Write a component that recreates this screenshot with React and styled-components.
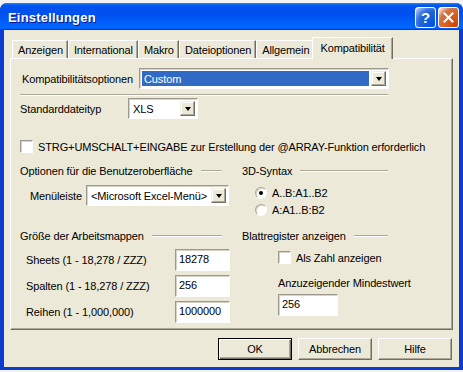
import React from 'react';
import styled, { createGlobalStyle, css } from 'styled-components';

const GlobalStyle = createGlobalStyle`
  html, body { margin: 0; padding: 0; background: #f2f2f2; }
  body { font-family: "Liberation Sans", Arial, sans-serif; font-size: 11px; letter-spacing: -0.12px; color: #000; }
  * { box-sizing: border-box; }
`;

const Window = styled.div`
  margin-top: 3px;
  width: 463px;
  height: 367px;
  display: flex;
  flex-direction: column;
  background: #0a3cd0;
  border-radius: 7px 7px 0 0;
  overflow: hidden;
`;

const TitleBar = styled.div`
  height: 27px;
  flex: none;
  display: flex;
  align-items: center;
  padding: 1px 4px 0 8px;
  background: linear-gradient(180deg, #0997ff, #0053ee 8%, #0050ee 40%, #06f 88%, #06f 93%, #005bff 95%, #003dd7 96%, #003dd7);
`;

const Title = styled.div`
  flex: 1;
  font-family: "Liberation Sans", Arial, sans-serif;
  font-weight: bold;
  font-size: 13px;
  color: #fff;
  text-shadow: 1px 1px #0f1089;
  letter-spacing: 0.2px;
`;

const CaptionButton = styled.div`
  width: 21px;
  height: 21px;
  margin-left: 2px;
  border: 1px solid #fff;
  border-radius: 3px;
  display: flex;
  align-items: center;
  justify-content: center;
  color: #fff;
  font-weight: bold;
  font-size: 15px;
  font-family: "Liberation Sans", Arial, sans-serif;
  background: ${p => p.$kind === 'close'
    ? 'radial-gradient(circle at 90% 90%, #cc4600 0%, #dc6527 55%, #cd7546 70%, #ffccb2 90%, #fff 100%)'
    : 'radial-gradient(circle at 90% 90%, #0054e9 0%, #2263d5 55%, #4479e4 70%, #a3bbec 90%, #fff 100%)'};
`;

const Body = styled.div`
  flex: 1;
  margin: 0 4px 3px 4px;
  background: #ece9d8;
  padding: 7px 6px 0 6px;
  display: flex;
  flex-direction: column;
`;

const TabStrip = styled.div`
  height: 21px;
  display: flex;
  align-items: flex-end;
  padding-left: 2px;
  position: relative;
  z-index: 1;
`;

const Tab = styled.div`
  height: 18px;
  padding: 0 4px 0 5px;
  display: flex;
  align-items: center;
  white-space: nowrap;
  border-top: 1px solid #fff;
  border-left: 1px solid #fff;
  border-right: 1px solid #716f64;
  box-shadow: inset -1px 0 #aca899;
  background: #ece9d8;
  ${p => p.$active && css`
    height: 22px;
    margin: 0 0 -1px -2px;
    padding: 0 7px 2px 7px;
  `}
`;

const Panel = styled.div`
  height: 272px;
  border: 1px solid;
  border-color: #fff #716f64 #716f64 #fff;
  box-shadow: inset -1px -1px #aca899;
  padding: 9px 0 0 9px;
  display: flex;
  flex-direction: column;
  align-items: flex-start;
`;

const Row = styled.div`
  display: flex;
  align-items: center;
  white-space: nowrap;
  height: ${p => p.$h || 21}px;
  margin-top: ${p => p.$mt || 0}px;
  padding-left: ${p => p.$pl || 0}px;
`;

const Label = styled.span`
  width: ${p => p.$w}px;
  padding-left: ${p => p.$pl || 0}px;
  white-space: nowrap;
  flex: none;
`;

const Sunken = css`
  border: 1px solid;
  border-color: #9c9a8e #fff #fff #9c9a8e;
  box-shadow: inset 1px 1px #d6d3c6;
  background: #fff;
`;

const Combo = styled.div`
  ${Sunken}
  width: ${p => p.$w}px;
  height: 21px;
  display: flex;
  align-items: stretch;
  padding: 2px;
  flex: none;
`;

const ComboText = styled.div`
  flex: 1;
  display: flex;
  align-items: center;
  padding-left: 2px;
  white-space: nowrap;
  overflow: hidden;
  ${p => p.$selected && css`
    background: #316ac5;
    color: #fff;
    margin-right: 2px;
  `}
`;

const DropButton = styled.div`
  width: 15px;
  flex: none;
  background: #ece9d8;
  border: 1px solid;
  border-color: #f1efe2 #716f64 #716f64 #f1efe2;
  box-shadow: inset -1px -1px #aca899, inset 1px 1px #fff;
  display: flex;
  align-items: center;
  justify-content: center;
  &::after {
    content: '';
    width: 0;
    height: 0;
    border-left: 3.5px solid transparent;
    border-right: 3.5px solid transparent;
    border-top: 4px solid #000;
  }
`;

const Separator = styled.div`
  width: 368px;
  margin-top: 5px;
  border-top: 1px solid #aca899;
  border-bottom: 1px solid #fff;
`;

const CheckBox = styled.span`
  ${Sunken}
  width: 13px;
  height: 13px;
  flex: none;
  margin-right: 5px;
`;

const Grid = styled.div`
  margin-top: 11px;
  display: grid;
  grid-template-columns: 202px 146px;
  grid-template-rows: 14px 51px 14px auto;
  column-gap: 20px;
`;

const GroupHeader = styled.div`
  display: flex;
  align-items: center;
  white-space: nowrap;
  &::after {
    content: '';
    flex: 1;
    margin-left: 8px;
    border-top: 1px solid #aca899;
    border-bottom: 1px solid #fff;
  }
`;

const Column = styled.div`
  display: flex;
  flex-direction: column;
  padding-left: ${p => p.$pl || 0}px;
  padding-top: ${p => p.$pt || 0}px;
  gap: ${p => p.$gap || 0}px;
`;

const Radio = styled.span`
  width: 12px;
  height: 12px;
  border-radius: 50%;
  flex: none;
  margin-right: 5px;
  background: #fff;
  border: 1px solid;
  border-color: #aca899 #fff #fff #aca899;
  box-shadow: inset 1px 1px #d6d3c6;
  display: flex;
  align-items: center;
  justify-content: center;
  ${p => p.$checked && css`
    &::after {
      content: '';
      width: 4px;
      height: 4px;
      border-radius: 50%;
      background: #000;
    }
  `}
`;

const TextBox = styled.div`
  ${Sunken}
  width: ${p => p.$w}px;
  height: 22px;
  padding: 3px 0 0 3px;
  flex: none;
`;

const Caption = styled.div`
  height: 14px;
  line-height: 14px;
  white-space: nowrap;
  margin-top: ${p => p.$mt || 0}px;
  margin-bottom: ${p => p.$mb || 0}px;
`;

const ButtonRow = styled.div`
  display: flex;
  justify-content: flex-end;
  gap: 6px;
  margin-top: 8px;
  padding-right: 1px;
`;

const Button = styled.div`
  width: 74px;
  height: 22px;
  display: flex;
  align-items: center;
  justify-content: center;
  background: #ece9d8;
  border: 1px solid;
  border-color: #fff #716f64 #716f64 #fff;
  box-shadow: inset -1px -1px #aca899;
  ${p => p.$default && css`
    border-color: #000;
    box-shadow: inset 1px 1px #fff, inset -1px -1px #716f64, inset -2px -2px #aca899;
  `}
`;

const tabs = ['Anzeigen', 'International', 'Makro', 'Dateioptionen', 'Allgemein', 'Kompatibilität'];

export default function App() {
  return (
    <>
      <GlobalStyle />
      <Window>
        <TitleBar>
          <Title>Einstellungen</Title>
          <CaptionButton>?</CaptionButton>
          <CaptionButton $kind="close">
            <svg width="11" height="11" viewBox="0 0 11 11">
              <path d="M1.5 1.5 L9.5 9.5 M9.5 1.5 L1.5 9.5" stroke="#fff" strokeWidth="2" strokeLinecap="square" />
            </svg>
          </CaptionButton>
        </TitleBar>
        <Body>
          <TabStrip>
            {tabs.map((t, i) => (
              <Tab key={t} $active={i === tabs.length - 1}>{t}</Tab>
            ))}
          </TabStrip>
          <Panel>
            <Row>
              <Label $w={119} $pl={2}>Kompatibilitätsoptionen</Label>
              <Combo $w={250}>
                <ComboText $selected>Custom</ComboText>
                <DropButton />
              </Combo>
            </Row>
            <Separator />
            <Row $mt={2}>
              <Label $w={108}>Standarddateityp</Label>
              <Combo $w={70}>
                <ComboText>XLS</ComboText>
                <DropButton />
              </Combo>
            </Row>
            <Row $mt={21} $h={13}>
              <CheckBox />
              <span>STRG+UMSCHALT+EINGABE zur Erstellung der @ARRAY-Funktion erforderlich</span>
            </Row>
            <Grid>
              <GroupHeader>Optionen für die Benutzeroberfläche</GroupHeader>
              <GroupHeader>3D-Syntax</GroupHeader>
              <Column $pl={10} $pt={7}>
                <Row>
                  <Label $w={56}>Menüleiste</Label>
                  <Combo $w={143}>
                    <ComboText>&lt;Microsoft Excel-Menü&gt;</ComboText>
                    <DropButton />
                  </Combo>
                </Row>
              </Column>
              <Column $pl={13} $pt={6}>
                <Row $h={17}><Radio $checked />A..B:A1..B2</Row>
                <Row $h={17}><Radio />A:A1..B:B2</Row>
              </Column>
              <GroupHeader>Größe der Arbeitsmappen</GroupHeader>
              <GroupHeader>Blattregister anzeigen</GroupHeader>
              <Column $pl={6} $pt={6} $gap={4}>
                <Row $h={22}>
                  <Label $w={149}>Sheets (1 - 18,278 / ZZZ)</Label>
                  <TextBox $w={55}>18278</TextBox>
                </Row>
                <Row $h={22}>
                  <Label $w={149}>Spalten (1 - 18,278 / ZZZ)</Label>
                  <TextBox $w={55}>256</TextBox>
                </Row>
                <Row $h={22}>
                  <Label $w={149}>Reihen (1 - 1,000,000)</Label>
                  <TextBox $w={55}>1000000</TextBox>
                </Row>
              </Column>
              <Column $pl={36} $pt={8}>
                <Row $h={13}>
                  <CheckBox />
                  <span>Als Zahl anzeigen</span>
                </Row>
                <Caption $mt={12} $mb={4}>Anzuzeigender Mindestwert</Caption>
                <TextBox $w={60}>256</TextBox>
              </Column>
            </Grid>
          </Panel>
          <ButtonRow>
            <Button $default>OK</Button>
            <Button>Abbrechen</Button>
            <Button>Hilfe</Button>
          </ButtonRow>
        </Body>
      </Window>
    </>
  );
}
